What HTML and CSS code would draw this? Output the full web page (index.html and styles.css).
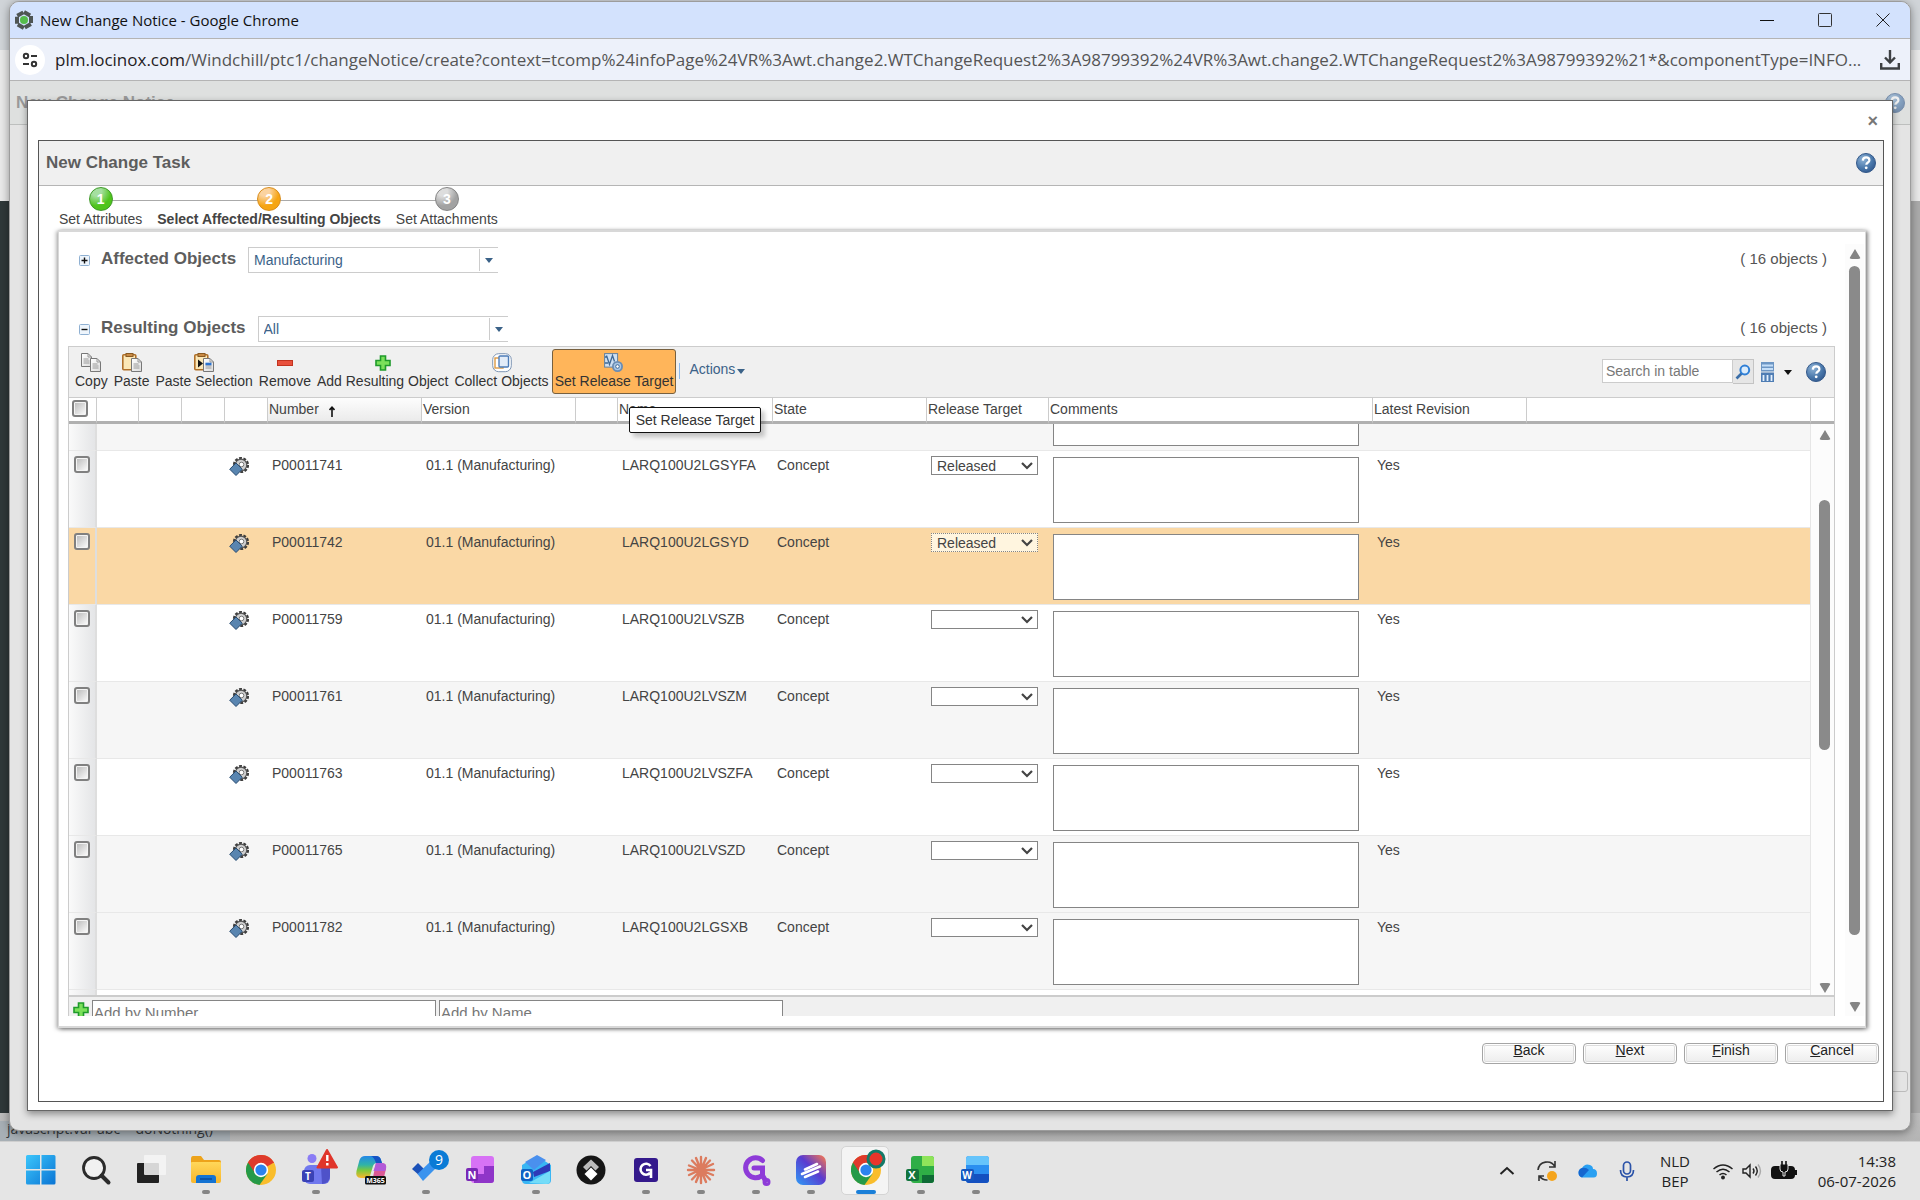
FILE: index.html
```html
<!DOCTYPE html>
<html lang="en">
<head>
<meta charset="utf-8">
<title>New Change Notice</title>
<link rel="stylesheet" href="styles.css">
</head>
<body>
<svg class="defs" aria-hidden="true">
  <defs>
    <radialGradient id="helpFill" cx="0.35" cy="0.3" r="0.8"><stop offset="0" stop-color="#8fb3d6"/><stop offset="0.6" stop-color="#4a78ab"/><stop offset="1" stop-color="#2f568c"/></radialGradient>
    <linearGradient id="pageFill" x2="1" y2="1"><stop offset="0" stop-color="#fff"/><stop offset="1" stop-color="#dcdcdc"/></linearGradient>
    <linearGradient id="winFill" x2="1" y2="1"><stop offset="0" stop-color="#3cc6fb"/><stop offset="1" stop-color="#0a74d4"/></linearGradient>
    <linearGradient id="folderFill" y2="1" x2="0"><stop offset="0" stop-color="#ffd75a"/><stop offset="1" stop-color="#f9b62a"/></linearGradient>
    <linearGradient id="appFill" x1="1" x2="0" y2="1"><stop offset="0" stop-color="#ff7a4a"/><stop offset="0.45" stop-color="#5a3bd0"/><stop offset="1" stop-color="#2f9bf5"/></linearGradient>
    <linearGradient id="copilotFill" x2="0" y2="1"><stop offset="0" stop-color="#2487e8"/><stop offset="0.4" stop-color="#2fb3a8"/><stop offset="0.65" stop-color="#7cc83c"/><stop offset="1" stop-color="#fbb52a"/></linearGradient>
  </defs>
  <symbol id="help" viewBox="0 0 20 20"><circle cx="10" cy="10" r="9.5" fill="url(#helpFill)" stroke="#34598a"/><path d="M6.8 7.6C6.9 5.4 8.3 4.4 10.2 4.4c2 0 3.2 1.200 3.200 2.800 0 2.300-3.100 2.300-3.100 4.600" fill="none" stroke="#fff" stroke-width="2.200"/><circle cx="10.200" cy="14.800" r="1.400" fill="#fff"/></symbol>
  <symbol id="gear" viewBox="0 0 20 20"><circle cx="12" cy="9" r="6.600" fill="none" stroke="#3c3c3c" stroke-width="3" stroke-dasharray="2.700 1.450"/><circle cx="12" cy="9" r="5.800" fill="#cfcfcf" stroke="#555" stroke-width="1.200"/><circle cx="12.500" cy="8.500" r="2.300" fill="#fff" stroke="#777"/><path d="M7 7 13.300 13.200 7 19.500.7 13.200z" fill="#5985b0" stroke="#274b70"/></symbol>
  <symbol id="plus" viewBox="0 0 16 16"><path d="M5.500 1h5v4.500H15v5h-4.500V15h-5v-4.500H1v-5h4.500z" fill="#7be05a" stroke="#1f9a2b" stroke-width="1.600"/></symbol>
  <symbol id="page" viewBox="0 0 11 14"><path d="M.5.5h6.500l3.500 3.500v9.500H.5z" fill="url(#pageFill)" stroke="#777"/><path d="M7 .5V4h3.500M2.500 6h5M2.500 8h6M2.500 10h6" fill="none" stroke="#999"/></symbol>
  <symbol id="chrome" viewBox="0 0 30 30"><circle cx="15" cy="15" r="15" fill="#f9bd2c"/><path d="M15 15 2 7.500A15 15 0 0 1 28 7.500z" fill="#de3a2c"/><path d="M15 15 2 7.500A15 15 0 0 0 13.500 30L21.500 18.800z" fill="#259a48"/><path d="M15 8h12.900A15 15 0 0 0 2 7.500L9 18z" fill="#de3a2c"/><circle cx="15" cy="15" r="7.200" fill="#fff"/><circle cx="15" cy="15" r="5.600" fill="#2b83ee"/></symbol>
</svg>

<div class="desktop">
  <div class="behind-status"><span>javascript:var abc = doNothing()</span></div>
  <main class="window">
    <header class="titlebar">
      <svg class="app-icon" viewBox="0 0 20 20"><path d="M10 2 17 6v8l-7 4-7-4V6z" fill="none" stroke="#4e5554" stroke-width="4" stroke-dasharray="7 1.100"/><circle cx="10" cy="10" r="4" fill="#55bb4b"/></svg>
      <span class="title">New Change Notice - Google Chrome</span>
      <div class="window-controls">
        <button aria-label="Minimize"><svg viewBox="0 0 14 14"><path d="M0 7.500h14" stroke="#111"/></svg></button>
        <button aria-label="Maximize"><svg viewBox="0 0 14 14"><rect x=".5" y=".5" width="13" height="13" rx="1" fill="none" stroke="#333"/></svg></button>
        <button aria-label="Close"><svg viewBox="0 0 14 14"><path d="M.5.5l13 13M13.500.5l-13 13" stroke="#222"/></svg></button>
      </div>
    </header>
    <div class="addressbar">
      <button class="site-info" aria-label="Site information"><svg viewBox="0 0 16 16" fill="none" stroke="#333" stroke-width="2"><circle cx="4" cy="4" r="2.200"/><path d="M9 4h6M1 12h6"/><circle cx="12" cy="12" r="2.200"/></svg></button>
      <span class="url"><b>plm.locinox.com</b>/Windchill/ptc1/changeNotice/create?context=tcomp%24infoPage%24VR%3Awt.change2.WTChangeRequest2%3A98799392%24VR%3Awt.change2.WTChangeRequest2%3A98799392%21*&amp;componentType=INFO...</span>
      <button class="download" aria-label="Downloads"><svg viewBox="0 0 20 20" fill="none" stroke="#3d4043" stroke-width="2.400"><path d="M10 0v12M5 7.500l5 5 5-5M1.200 13v5.500h17.600V13"/></svg></button>
    </div>
    <div class="page">
      <div class="page-header"><h1>New Change Notice</h1><svg class="help"><use href="#help"/></svg></div>
      <div class="page-button"></div>

      <section class="modal" role="dialog" aria-label="New Change Task">
        <div class="modal-bar"><button class="modal-close" aria-label="Close dialog">×</button></div>
        <div class="frame">
          <div class="frame-header"><h2>New Change Task</h2><svg class="help"><use href="#help"/></svg></div>
          <ol class="steps">
            <li><span class="dot done">1</span>Set Attributes</li>
            <li class="current"><span class="dot active">2</span>Select Affected/Resulting Objects</li>
            <li><span class="dot todo">3</span>Set Attachments</li>
          </ol>

          <div class="panel">
            <div class="content">
              <div class="section-row">
                <button class="toggle" aria-label="Expand"><svg viewBox="0 0 11 11"><rect x=".5" y=".5" width="10" height="10" rx="1" fill="#eef5fc" stroke="#8fb0d2"/><path d="M2.500 5.500h6M5.500 2.500v6" stroke="#111" stroke-width="1.400"/></svg></button>
                <label class="heading" for="affected">Affected Objects</label>
                <select class="combo" id="affected"><option>Manufacturing</option></select>
                <span class="count">( 16 objects )</span>
              </div>
              <div class="section-row second">
                <button class="toggle" aria-label="Collapse"><svg viewBox="0 0 11 11"><rect x=".5" y=".5" width="10" height="10" rx="1" fill="#eef5fc" stroke="#8fb0d2"/><path d="M2.500 5.500h6" stroke="#111" stroke-width="1.400"/></svg></button>
                <label class="heading" for="resulting">Resulting Objects</label>
                <select class="combo" id="resulting"><option>All</option></select>
                <span class="count">( 16 objects )</span>
              </div>

              <div class="grid">
                <div class="toolbar">
                  <button class="tool"><svg viewBox="0 0 20 20"><use href="#page" width="11" height="14"/><use href="#page" x="9" y="5" width="11" height="14"/></svg>Copy</button>
                  <button class="tool"><svg viewBox="0 0 20 20"><rect x=".8" y="1.800" width="13" height="15" rx="1" fill="#fbe7b6" stroke="#b0702a" stroke-width="1.600"/><rect x="4" y=".5" width="7" height="3" fill="#c98a45" stroke="#8a5a22"/><use href="#page" x="9" y="5" width="11" height="14"/></svg>Paste</button>
                  <button class="tool"><svg viewBox="0 0 20 20"><rect x=".8" y="1.800" width="13" height="15" rx="1" fill="#fbe7b6" stroke="#b0702a" stroke-width="1.600"/><rect x="4" y=".5" width="7" height="3" fill="#c98a45" stroke="#8a5a22"/><use href="#page" x="9" y="5" width="11" height="14"/><path d="M4 6.500l5 4-5 4z" fill="#111"/><path d="M11.500 11h6" stroke="#2c74d0" stroke-width="2.600"/></svg>Paste Selection</button>
                  <button class="tool"><svg viewBox="0 0 20 20"><rect x="2.500" y="7.500" width="15" height="5" fill="#e8503c" stroke="#c2331f"/></svg>Remove</button>
                  <button class="tool"><svg viewBox="0 0 20 20"><use href="#plus" x="2" y="2" width="16" height="16"/></svg>Add Resulting Object</button>
                  <button class="tool"><svg viewBox="0 0 20 20"><rect x=".7" y=".7" width="18.600" height="18" rx="6" fill="#fff" stroke="#7e95b4"/><rect x="3" y="5" width="8" height="10" fill="#fff" stroke="#dc9a45" stroke-width="1.400"/><rect x="7" y="3" width="9.500" height="11" rx="1" fill="#e3ecf8" stroke="#4d7cb8" stroke-width="1.400"/></svg>Collect Objects</button>
                  <button class="tool hover"><svg viewBox="0 0 20 20"><rect x=".6" y=".6" width="13" height="13.500" fill="#cfe0f2" stroke="#62809f"/><path d="M2.500 2.500l3 9 3-9 2 6M1 4h2M1 10h3" fill="none" stroke="#3d6896" stroke-width="1.300"/><circle cx="13.500" cy="13.500" r="4.600" fill="#a9c6e4" stroke="#6b8db4" stroke-width="1.800"/><circle cx="13.500" cy="13.500" r="1.800" fill="#fff" stroke="#3d6896"/></svg>Set Release Target<span class="tooltip" role="tooltip">Set Release Target</span></button>
                  <span class="divider"></span>
                  <button class="actions">Actions<i class="caret"></i></button>
                  <div class="tools-right">
                    <input class="search" type="text" placeholder="Search in table" aria-label="Search in table">
                    <button class="search-btn" aria-label="Search"><svg viewBox="0 0 16 16"><path d="M1.500 14.500 7 9" stroke="#3a6ea8" stroke-width="2.600"/><circle cx="9.800" cy="6" r="4.400" fill="#dcecfb" stroke="#2f7fd6" stroke-width="2"/></svg></button>
                    <button class="view-btn" aria-label="Table view"><svg viewBox="0 0 13 20"><rect width="13" height="9.500" fill="#6d96c4"/><path d="M1 3.500h11M1 7h11" stroke="#c4def8" stroke-width="1.800"/><rect y="10.500" width="13" height="9.500" fill="#4f7db4"/><path d="M2.500 13v6M6.500 13v6M10.500 13v6" stroke="#e4f0fd" stroke-width="1.800"/></svg><i class="caret dark"></i></button>
                    <svg class="help"><use href="#help"/></svg>
                  </div>
                </div>

                <table class="head">
                  <colgroup><col class="c-check"><col class="c-a"><col class="c-b"><col class="c-b"><col class="c-b"><col class="c-text"><col class="c-text"><col class="c-a"><col class="c-name"><col class="c-text"><col class="c-target"><col class="c-comment"><col class="c-text"><col><col class="c-scroll"></colgroup>
                  <thead><tr><th><input type="checkbox" class="check" aria-label="Select all"></th><th></th><th></th><th></th><th></th><th class="sorted">Number<svg class="sort" viewBox="0 0 6 11"><path d="M3 11V1M.5 4 3 1.200 5.500 4" fill="none" stroke="#111" stroke-width="1.600"/></svg></th><th>Version</th><th></th><th>Name</th><th>State</th><th>Release Target</th><th>Comments</th><th>Latest Revision</th><th></th><th></th></tr></thead>
                </table>

                <div class="body">
                  <div class="viewport">
                  <table class="rows">
                    <colgroup><col class="c-check"><col class="c-a"><col class="c-b"><col class="c-b"><col class="c-b"><col class="c-text"><col class="c-text"><col class="c-a"><col class="c-name"><col class="c-text"><col class="c-target"><col class="c-comment"><col class="c-text"><col></colgroup>
                    <tbody>
                    <tr class="alt"><td></td><td></td><td></td><td></td><td></td><td></td><td></td><td></td><td></td><td></td><td></td><td><textarea aria-label="Comments"></textarea></td><td></td><td></td></tr>
                    <tr><td><input type="checkbox" class="check" aria-label="Select P00011741"></td><td></td><td></td><td></td><td><svg class="part"><use href="#gear"/></svg></td><td>P00011741</td><td>01.1 (Manufacturing)</td><td></td><td>LARQ100U2LGSYFA</td><td>Concept</td><td><select class="target" aria-label="Release target"><option>Released</option></select></td><td><textarea aria-label="Comments"></textarea></td><td>Yes</td><td></td></tr>
                    <tr class="selected"><td><input type="checkbox" class="check" aria-label="Select P00011742"></td><td></td><td></td><td></td><td><svg class="part"><use href="#gear"/></svg></td><td>P00011742</td><td>01.1 (Manufacturing)</td><td></td><td>LARQ100U2LGSYD</td><td>Concept</td><td><select class="target" aria-label="Release target"><option>Released</option></select></td><td><textarea aria-label="Comments"></textarea></td><td>Yes</td><td></td></tr>
                    <tr><td><input type="checkbox" class="check" aria-label="Select P00011759"></td><td></td><td></td><td></td><td><svg class="part"><use href="#gear"/></svg></td><td>P00011759</td><td>01.1 (Manufacturing)</td><td></td><td>LARQ100U2LVSZB</td><td>Concept</td><td><select class="target" aria-label="Release target"><option></option></select></td><td><textarea aria-label="Comments"></textarea></td><td>Yes</td><td></td></tr>
                    <tr class="alt"><td><input type="checkbox" class="check" aria-label="Select P00011761"></td><td></td><td></td><td></td><td><svg class="part"><use href="#gear"/></svg></td><td>P00011761</td><td>01.1 (Manufacturing)</td><td></td><td>LARQ100U2LVSZM</td><td>Concept</td><td><select class="target" aria-label="Release target"><option></option></select></td><td><textarea aria-label="Comments"></textarea></td><td>Yes</td><td></td></tr>
                    <tr><td><input type="checkbox" class="check" aria-label="Select P00011763"></td><td></td><td></td><td></td><td><svg class="part"><use href="#gear"/></svg></td><td>P00011763</td><td>01.1 (Manufacturing)</td><td></td><td>LARQ100U2LVSZFA</td><td>Concept</td><td><select class="target" aria-label="Release target"><option></option></select></td><td><textarea aria-label="Comments"></textarea></td><td>Yes</td><td></td></tr>
                    <tr class="alt"><td><input type="checkbox" class="check" aria-label="Select P00011765"></td><td></td><td></td><td></td><td><svg class="part"><use href="#gear"/></svg></td><td>P00011765</td><td>01.1 (Manufacturing)</td><td></td><td>LARQ100U2LVSZD</td><td>Concept</td><td><select class="target" aria-label="Release target"><option></option></select></td><td><textarea aria-label="Comments"></textarea></td><td>Yes</td><td></td></tr>
                    <tr class="alt"><td><input type="checkbox" class="check" aria-label="Select P00011782"></td><td></td><td></td><td></td><td><svg class="part"><use href="#gear"/></svg></td><td>P00011782</td><td>01.1 (Manufacturing)</td><td></td><td>LARQ100U2LGSXB</td><td>Concept</td><td><select class="target" aria-label="Release target"><option></option></select></td><td><textarea aria-label="Comments"></textarea></td><td>Yes</td><td></td></tr>
                    <tr><td><input type="checkbox" class="check" aria-label="Select row"></td><td></td><td></td><td></td><td></td><td></td><td></td><td></td><td></td><td></td><td><select class="target" aria-label="Release target"><option></option></select></td><td></td><td></td><td></td></tr>
                    </tbody>
                  </table>
                  </div>
                  <div class="scrollbar inner"><i class="up"></i><div class="track"><i class="thumb"></i></div><i class="down"></i></div>
                </div>
                <div class="adder">
                  <svg class="add-icon"><use href="#plus"/></svg>
                  <input type="text" placeholder="Add by Number" aria-label="Add by Number">
                  <input type="text" placeholder="Add by Name" aria-label="Add by Name">
                </div>
              </div>
            </div>
            <div class="scrollbar outer"><i class="up"></i><div class="track"><i class="thumb"></i></div><i class="down"></i></div>
          </div>

          <footer class="wizard-buttons">
            <button><u>B</u>ack</button><button><u>N</u>ext</button><button><u>F</u>inish</button><button><u>C</u>ancel</button>
          </footer>
        </div>
      </section>
    </div>
  </main>
</div>

<nav class="taskbar" aria-label="Taskbar">
  <div class="apps">
    <button aria-label="Start"><svg viewBox="0 0 30 30" fill="url(#winFill)"><path d="M0 1.500Q0 0 1.500 0H14v14H0zM15.500 0H28q1.500 0 1.500 1.500V14h-14zM0 15.500h14v14H1.500Q0 29.500 0 28zM15.500 15.500h14V28q0 1.500-1.500 1.500H15.500z"/></svg></button>
    <button aria-label="Search"><svg viewBox="0 0 30 30" fill="none" stroke="#2b2b2b"><circle cx="13" cy="13" r="10.500" fill="#f1f1f1" stroke-width="2.800"/><path d="M20.500 20.500l7 7" stroke-width="4" stroke-linecap="round"/></svg></button>
    <button aria-label="Task view"><svg viewBox="0 0 30 30"><rect x="1" y="8" width="22" height="20" rx="1" fill="#222"/><rect x="8" y="0" width="22" height="20" rx="1" fill="#f6f6f6" fill-opacity=".85"/></svg></button>
    <button class="running" aria-label="File Explorer"><svg viewBox="0 0 30 30"><path d="M0 4q0-3 2-3h8l3 4h15q2 0 2 2v8H0z" fill="#eda31b"/><path d="M0 8q0-1 1-1h28q1 0 1 1v18q0 2-2 2H2q-2 0-2-2z" fill="url(#folderFill)"/><path d="M5 28v-5q0-3 3-3h14q3 0 3 3v5z" fill="#1473d2"/><path d="M9 24h12" stroke="#0a4a9a" stroke-width="1.500"/></svg></button>
    <button aria-label="Chrome"><svg><use href="#chrome"/></svg></button>
    <button class="running" aria-label="Teams"><svg viewBox="0 0 30 30"><circle cx="11" cy="3.500" r="4.500" fill="#8a7cf5"/><rect x="3" y="10" width="26" height="19" rx="6" fill="#7078ee"/><path d="M20 11h9v10q0 7-8 8z" fill="#4f52c9"/><rect x="1" y="15" width="12" height="12" rx="2" fill="#3a42b5"/><text x="7" y="25" class="glyph g10">T</text><path d="M26-5 36 12.500H16.500z" fill="#e0352b" stroke="#e0352b" stroke-width="2" stroke-linejoin="round"/><path d="M26.300 0v6M26.300 8v2.500" stroke="#fff" stroke-width="2.400"/></svg></button>
    <button aria-label="Microsoft 365 Copilot"><svg viewBox="0 0 30 30"><path d="M9 1h11q4 0 5 4l1 3h-5q-3 0-4 3l-3 10q-1 2-4 2H5q-6 0-4.500-7l3-11Q5 1 9 1z" fill="url(#copilotFill)"/><path d="M15 1h5q4 0 5 4l1 3h-6q-2-6-5-7z" fill="#1553c4"/><path d="M20 8h6q5 0 4 6l-2 8q-1 5-6 5h-9q3-1 4-5z" fill="#dc5a96"/><path d="M20 8h6q5 0 4 6l-1 2H17.500z" fill="#b25ad8"/><rect x="9" y="21" width="21" height="8.500" rx="1.500" fill="#111"/><text x="19.500" y="28" class="glyph g7">M365</text></svg></button>
    <button class="running" aria-label="To Do"><svg viewBox="0 0 30 30"><path d="M1 14l6-6 7 7-5 6z" fill="#1b51b8"/><path d="M6.500 19 22 4l7 5-17 17z" fill="#3a93ee"/></svg><span class="badge">9</span></button>
    <button aria-label="OneNote"><svg viewBox="0 0 30 30"><rect x="5" y="1" width="23" height="27" rx="3" fill="#d772f5"/><path d="M18 11h10v14q0 3-3 3H8v-9h10z" fill="#8f35c8"/><rect y="13" width="12" height="13" rx="2" fill="#7a28b5"/><text x="6" y="24" class="glyph g11">N</text></svg></button>
    <button class="running" aria-label="Outlook"><svg viewBox="0 0 30 30"><path d="M1 10 16 1l14 9v15q0 4-4 4H5q-4 0-4-4z" fill="#39b6f4"/><path d="M4 7 16 0l9 5-12 10z" fill="#4a90ee"/><path d="M12 17 29 8v8l-16 6z" fill="#2e39b8"/><path d="M8 28 29 16v10q0 3-4 3z" fill="#74dcf8"/><rect y="14" width="12" height="12" rx="2" fill="#0f62c4"/><text x="6" y="24" class="glyph g11">O</text></svg></button>
    <button aria-label="Diamond"><svg viewBox="0 0 30 30"><circle cx="15" cy="15" r="14.500" fill="#161616"/><path d="M15 4.500 23 12l-3.500 3.500L15 11l-4.500 4.500L7 12z" fill="#bbb"/><path d="M15 12.500l6.500 6.500L15 25.500 8.500 19z" fill="#fff"/></svg></button>
    <button class="running" aria-label="G app"><svg viewBox="0 0 30 30"><rect x="3" y="3" width="24" height="24" rx="3" fill="#34198c"/><path d="M19.500 11A5.500 5.500 0 1 0 19 18M15 15h5v8" fill="none" stroke="#fff" stroke-width="2.600"/></svg></button>
    <button class="running" aria-label="Claude"><svg viewBox="0 0 30 30" stroke="#dc7b5e" stroke-width="2.400" stroke-linecap="round"><path d="M15 2v26M2 15h26M6 5.500l18 19M24 5.500l-18 19M10 3l10 24M3 10.500l24 9.500M20 3 10 27M27 9 3 20"/></svg></button>
    <button class="running" aria-label="Gong"><svg viewBox="0 0 30 30" fill="none" stroke="#8e3bd8" stroke-width="5"><path d="M21.500 5.500A10 10 0 1 0 21 20.500M13 13h8.500v7.500l3 5" stroke-linecap="round"/><circle cx="25.500" cy="27" r="1.500"/></svg></button>
    <button class="running" aria-label="Workspace"><svg viewBox="0 0 30 30"><rect width="30" height="30" rx="7" fill="url(#appFill)"/><path d="M9 14.500 21 9M6 19l18-7.500M9 22l13-5.500" stroke="#fff" stroke-width="2.600" stroke-linecap="round"/></svg></button>
    <button class="focused" aria-label="Chrome, active"><svg viewBox="0 0 30 30"><use href="#chrome" width="30" height="30"/><circle cx="25" cy="4" r="8" fill="#e8352b" stroke="#157a68" stroke-width="3"/></svg></button>
    <button class="running" aria-label="Excel"><svg viewBox="0 0 30 30"><rect x="5" y="1" width="23" height="27" rx="3" fill="#2fae46"/><path d="M16 1h9q3 0 3 3v7H16z" fill="#8fe45a"/><path d="M16 20h12v5q0 3-3 3h-9z" fill="#0f6b35"/><rect y="14" width="13" height="12" rx="2" fill="#12743c"/><text x="6" y="24" class="glyph g11">X</text></svg></button>
    <button class="running" aria-label="Word"><svg viewBox="0 0 30 30"><rect x="5" y="1" width="23" height="27" rx="3" fill="#2b8ff0"/><path d="M8 1h17q3 0 3 3v6H5V4q0-3 3-3z" fill="#66c4fb"/><path d="M5 19h23v6q0 3-3 3H8q-3 0-3-3z" fill="#1450c0"/><rect y="14" width="13" height="12" rx="2" fill="#1558c0"/><text x="6" y="24" class="glyph g10">W</text></svg></button>
  </div>
  <div class="tray">
    <svg viewBox="0 0 20 20" fill="none" stroke="#222" stroke-width="2"><path d="M3.500 13 10 7l6.500 6"/></svg>
    <svg viewBox="0 0 20 20" fill="none" stroke="#333" stroke-width="1.600"><path d="M1 9a9 9 0 0 1 17-3M18 0v6h-6M2 20v-5h5M2.500 15a9 9 0 0 0 8 4"/><circle cx="15" cy="15" r="5" fill="#f4a41c" stroke="none"/></svg>
    <svg viewBox="0 0 20 20"><path d="M5 16.500a5 5 0 0 1 0-9.500q3-5 8-3 3 1 3 4 4 0 4 4.500t-4 4z" fill="#2aa0f2"/><path d="M5 16.500a5 5 0 0 1 0-9.500q4-1 7 2z" fill="#1566cf"/></svg>
    <svg viewBox="0 0 20 20" fill="none" stroke="#2a52a8" stroke-width="1.700"><rect x="6.500" y="1" width="7" height="12" rx="3.500"/><path d="M3.500 9q0 7 6.500 7t6.500-7M10 16v4"/></svg>
    <div class="lang">NLD<br>BEP</div>
    <svg viewBox="0 0 20 20" fill="none" stroke="#222" stroke-width="1.500"><path d="M.5 8q9.500-8 19 0M3.500 11q6.500-5.500 13 0M6.500 14q3.500-3 7 0"/><circle cx="10" cy="16.500" r="1.200" fill="#222"/></svg>
    <svg viewBox="0 0 20 20" fill="none" stroke="#222" stroke-width="1.400"><path d="M1 8h3l4-4v12l-4-4H1zM11 7.500q2 2.500 0 5M13.500 5.500q3.500 4.500 0 9"/><path d="M16 3.500q5 6.500 0 13" stroke="#aaa"/></svg>
    <svg class="battery" viewBox="0 0 26 20"><rect x="1" y="6" width="22" height="11" rx="3" fill="#111" stroke="#111" stroke-width="2"/><rect x="24" y="9" width="2" height="5" fill="#111"/><path d="M9 3h8v5q0 3-3 3v4h-2v-4q-3 0-3-3z" fill="#111" stroke="#e5e5e5"/><path d="M11 0v4M15 0v4" stroke="#111" stroke-width="1.600"/></svg>
    <div class="clock">14:38<br>06-07-2026</div>
  </div>
</nav>
</body>
</html>
```
FILE: styles.css
```css
* { box-sizing: border-box; }
body {
  margin: 0;
  height: 100vh;
  overflow: hidden;
  display: flex;
  flex-direction: column;
  font-family: "Liberation Sans", Arial, sans-serif;
  font-size: 14px;
  line-height: 16px;
  color: #444;
}
button, input, select, textarea { font: inherit; color: inherit; }
button { padding: 0; border: 0; background: none; }
h1, h2 { margin: 0; font-size: 17px; line-height: 20px; }
.defs { position: absolute; width: 0; height: 0; }
.help { width: 20px; height: 20px; flex: none; }

/* desktop and the window behind */
.desktop {
  flex: 1;
  min-height: 0;
  position: relative;
  padding: 1px 9px 10px;
  background:
    linear-gradient(#bdbdbd, #b4b4b4) bottom / 100% 28px no-repeat,
    linear-gradient(#d0d4d8 50px, #e8e8e8 50px 201px, #aaa 201px) right / 50% 100% no-repeat,
    linear-gradient(#d0d4d8 50px, #e8e8e8 50px 201px, #2f3839 201px);
}
.behind-status {
  position: absolute;
  left: 0;
  bottom: 0;
  width: 230px;
  padding: 0 7px 4px;
  background: #a7afb5;
  color: #34383c;
  font-family: "Open Sans", sans-serif;
}
.window {
  position: relative;
  height: 100%;
  display: flex;
  flex-direction: column;
  border: 1px solid #9c9c9c;
  border-radius: 10px;
  overflow: hidden;
  background: #e4e4e4;
  box-shadow: 0 2px 8px #0006;
}
.titlebar, .addressbar {
  display: flex;
  align-items: center;
  font-family: "Open Sans", sans-serif;
  flex: none;
}
.titlebar { height: 37px; padding: 0 20px 0 4px; background: #d3e2fd; border-bottom: 1px solid #b4b4b4; }
.app-icon { width: 20px; height: 20px; margin-right: 6px; }
.title { flex: 1; color: #111; font-size: 15px; }
.window-controls { display: flex; gap: 44px; }
.window-controls svg { width: 14px; height: 14px; display: block; }
.addressbar { height: 42px; padding: 0 10px 0 5px; background: #edf1fa; border-bottom: 1px solid #b4b4b4; font-size: 17px; color: #555; gap: 10px; }
.site-info { width: 30px; height: 30px; flex: none; border-radius: 50%; background: #fff; }
.site-info svg { width: 16px; height: 16px; display: block; margin: auto; }
.url { flex: 1; min-width: 0; white-space: nowrap; line-height: 24px; }
.url b { font-weight: 400; color: #1f2023; }
.download svg { width: 20px; height: 20px; display: block; }

.page { flex: 1; position: relative; }
.page-header { height: 44px; padding: 0 5px 0 6px; display: flex; align-items: center; justify-content: space-between; background: #dee0df; border-bottom: 1px solid #bdbfbe; color: #999; }
.page-header .help { opacity: .6; }
.page-button { position: absolute; right: 2px; bottom: 38px; width: 30px; height: 21px; border: 1px solid #bbb; border-radius: 3px; }

/* dialog */
.modal {
  position: absolute;
  inset: 19px 17px 19px;
  display: flex;
  flex-direction: column;
  padding: 0 8px 8px 10px;
  background: #fff;
  border: 1px solid #666;
  box-shadow: 0 3px 7px #0006;
}
.modal-bar { height: 39px; padding-right: 6px; display: flex; justify-content: flex-end; align-items: center; flex: none; }
.modal-close { font-size: 18px; font-weight: 700; color: #777; line-height: 16px; }
.frame { flex: 1; min-height: 0; display: flex; flex-direction: column; border: 1px solid #555; }
.frame-header { height: 45px; flex: none; padding: 0 7px; display: flex; align-items: center; justify-content: space-between; background: #f0f0f0; border-bottom: 1px solid #b5b5b5; color: #5d5d5d; }
.steps { position: relative; align-self: flex-start; display: flex; gap: 15px; flex: none; height: 44px; margin: 0; padding: 1px 20px 0; list-style: none; }
.steps::before { content: ""; position: absolute; top: 14px; left: 60px; right: 70px; border-top: 1px solid #aaa; }
.steps li { position: relative; display: flex; flex-direction: column; align-items: center; }
.steps .current { font-weight: 700; }
.dot { width: 24px; height: 24px; border-radius: 50%; font: 700 14px/22px "Liberation Sans", sans-serif; color: #fff; text-align: center; border: 1px solid; }
.done { background: radial-gradient(circle at 30% 15%, #a5dfa0 20%, #4fc41c 60%); border-color: #3f9a2a; }
.active { background: radial-gradient(circle at 30% 15%, #fbd3a0 20%, #f6a513 60%); border-color: #d98d1c; }
.todo { background: radial-gradient(circle at 30% 15%, #ddd 20%, #a2a2a2 60%); border-color: #858585; }

.panel {
  flex: 1;
  min-height: 0;
  display: flex;
  margin: 0 17px 0 19px;
  padding: 0 1px 10px 9px;
  border: 1px solid #d8d8d8;
  border-top-width: 2px;
  border-bottom-width: 2px;
  box-shadow: 2px 1px 4px #0007, -2px 1px 4px #0004;
}
.content { flex: 1; min-width: 0; display: flex; flex-direction: column; padding: 15px 10px 0 0; }
.section-row { display: flex; align-items: center; height: 26px; flex: none; padding: 0 8px 0 11px; }
.second { margin: 43px 0 4px; }
.toggle svg { width: 11px; height: 11px; display: block; }
.heading { margin: 0 12px 2px 11px; font-size: 17px; line-height: 20px; font-weight: 700; color: #5d5d5d; }
.combo {
  appearance: none;
  width: 250px;
  height: 26px;
  padding: 0 5px;
  border: 1px solid #ccc;
  border-right: 0;
  border-radius: 0;
  color: #3b6288;
  background:
    url("data:image/svg+xml,%3Csvg xmlns='http://www.w3.org/2000/svg' width='8' height='5'%3E%3Cpath d='M0 0h8L4 5z' fill='%233b6288'/%3E%3C/svg%3E") right 5px center no-repeat,
    linear-gradient(#ccc, #ccc) right 18px center / 1px 22px no-repeat #fff;
}
.count { margin: 0 0 2px auto; font-size: 15px; color: #555; }

/* object table */
.grid { flex: 1; min-height: 0; display: flex; flex-direction: column; border: 1px solid #ccc; border-bottom: 0; }
.toolbar { display: flex; flex: none; height: 51px; padding: 2px 8px 0 3px; background: #f0f0f0; border-bottom: 1px solid #ccc; color: #333; }
.tool { position: relative; height: 45px; padding: 3px 2px 0; border: 1px solid transparent; display: flex; flex-direction: column; align-items: center; white-space: nowrap; }
.tool svg { width: 20px; height: 20px; flex: none; }
.hover { background: #ffb55a; border-color: #77603f; border-radius: 3px; }
.tooltip { position: absolute; z-index: 2; left: 76px; top: 57px; padding: 3px 6px; border: 1px solid #111; border-radius: 2px; background: #fff; box-shadow: 4px 4px 4px #0003; line-height: 18px; }
.divider { width: 1px; height: 16px; margin: 14px 9px 0 3px; background: #8db9ea; }
.actions { align-self: flex-start; margin-top: 11px; color: #3b6288; display: flex; align-items: center; gap: 2px; line-height: 18px; }
.caret { border: 4px solid transparent; border-top: 5px solid #3b6288; border-bottom: 0; margin-top: 4px; }
.caret.dark { border-top-color: #111; margin: 0; }
.tools-right { margin-left: auto; display: flex; align-items: flex-start; padding-top: 10px; }
.search { width: 131px; height: 24px; padding: 0 3px; border: 1px solid #ccc; background: #fff; }
.search::placeholder, .adder input::placeholder { color: #777; opacity: 1; }
.search-btn { width: 21px; height: 25px; border: 1px solid #c4c4c4; border-left: 0; background: #e6e6e6; }
.search-btn svg { width: 16px; height: 16px; display: block; margin: auto; }
.view-btn { display: flex; align-items: center; gap: 10px; margin: 3px 14px 0 7px; }
.view-btn svg { width: 13px; height: 20px; }
.tools-right .help { margin-top: 3px; }

table { width: 100%; table-layout: fixed; border-collapse: separate; border-spacing: 0; }
.c-check { width: 28px; }
.c-a { width: 42px; }
.c-b { width: 43px; }
.c-text { width: 154px; }
.c-name { width: 155px; }
.c-target { width: 122px; }
.c-comment { width: 324px; }
.c-scroll { width: 23px; }
.head { flex: none; }
th { height: 26px; padding: 0 0 2px 1px; border-right: 1px solid #ccc; border-bottom: 3px solid #b0b0b0; text-align: left; font-weight: 400; white-space: nowrap; overflow: hidden; background: #fff; }
th:last-child { border-right: 0; }
.sorted { background: linear-gradient(#fdfdfd, #ebebeb); }
.sort { width: 6px; height: 11px; margin-left: 10px; vertical-align: -3px; }
.check {
  appearance: none;
  display: block;
  width: 16px;
  height: 17px;
  margin: 0 0 0 5px;
  border: 2px solid #808080;
  border-radius: 3px;
  background: linear-gradient(135deg, #b8b8b8, #fff);
  box-shadow: inset 0 0 0 1px #f4f4f4;
}
th .check { margin: 0 0 0 2px; }
.body { flex: 1; min-height: 0; display: flex; border-bottom: 2px solid #ccc; }
.viewport { flex: 1; min-width: 0; overflow: hidden; border-right: 1px solid #e6e6e6; }
.rows { margin-top: -50px; }
td { height: 77px; padding: 5px 0 0 4px; border-bottom: 1px solid #e8e8e8; vertical-align: top; line-height: 18px; white-space: nowrap; }
td:first-child { padding-left: 0; border-right: 2px solid #dedede; background: linear-gradient(90deg, #fafafa, #e4e5e7); }
.alt td:not(:first-child) { background: #f6f6f6; }
.selected td, .selected td:first-child { background: #fad8a5; }
.part { display: block; width: 20px; height: 20px; }
.target {
  appearance: none;
  display: block;
  width: 107px;
  height: 19px;
  padding: 0 5px;
  border: 1px solid #858585;
  border-radius: 0;
  background: url("data:image/svg+xml,%3Csvg xmlns='http://www.w3.org/2000/svg' width='12' height='8'%3E%3Cpath d='M1 1l5 5 5-5' fill='none' stroke='%23444' stroke-width='2.200'/%3E%3C/svg%3E") right 4px center no-repeat #fff;
}
.selected .target { background-color: #fff5df; border-style: dotted; }
textarea { display: block; width: 306px; height: 66px; margin: 1px 0 0; border: 1px solid #858585; border-radius: 0; background: #fff; resize: none; }

.scrollbar { display: flex; flex-direction: column; align-items: center; flex: none; background: #fcfcfc; }
.scrollbar .up { border: 6px solid transparent; border-top: 0; border-bottom: 10px solid #858585; border-radius: 3px; }
.scrollbar .down { border: 6px solid transparent; border-bottom: 0; border-top: 10px solid #858585; border-radius: 3px; }
.track { flex: 1; display: flex; flex-direction: column; align-items: center; }
.thumb { width: 11px; border-radius: 6px; background: #8a8a8a; }
.inner { width: 23px; padding: 6px 0 2px 4px; }
.inner .thumb { height: 46%; margin-top: 60px; }
.outer { width: 19px; margin-top: 12px; padding: 5px 0 4px; }
.outer .thumb { height: 90%; margin-top: 7px; }

.adder { display: flex; flex: none; height: 19px; overflow: hidden; gap: 3px; padding: 3px 0 0 4px; background: #f0f0f0; align-items: flex-start; }
.adder input { width: 344px; height: 24px; padding: 0 1px; border: 1px solid #858585; background: #fff; font-size: 15px; flex: none; }
.add-icon { width: 16px; height: 16px; margin-top: 2px; }

.wizard-buttons { display: flex; flex: none; justify-content: flex-end; gap: 7px; padding: 15px 4px 37px; }
.wizard-buttons button { width: 94px; height: 21px; padding-bottom: 6px; border: 1px solid #a5a5a5; border-radius: 4px; background: linear-gradient(#fff, #ececec); box-shadow: inset 0 0 0 1px #fff, inset 0 0 0 2px #ddd; color: #222; line-height: 13px; }

/* taskbar */
.taskbar { flex: none; height: 59px; display: flex; justify-content: space-between; padding: 0 24px 0 13px; background: #e5e5e5; border-top: 1px solid #cfcfcf; }
.apps { display: flex; }
.apps button { position: relative; width: 55px; height: 58px; padding: 0 0 2px; display: flex; align-items: center; justify-content: center; }
.apps svg { width: 30px; height: 30px; overflow: visible; }
.running::after, .focused::after { content: ""; position: absolute; bottom: 6px; left: 24px; width: 8px; height: 4px; border-radius: 2px; background: #858585; }
.focused::before { content: ""; position: absolute; z-index: -1; inset: 4px 4px 5px 3px; border-radius: 5px; background: #f4f4f4; border: 1px solid #d4d4d4; }
.focused { isolation: isolate; }
.focused::after { left: 18px; width: 20px; background: #1a7fd8; }
.glyph { fill: #fff; font-family: "Open Sans", sans-serif; font-weight: 700; text-anchor: middle; }
.g7 { font-size: 7px; }
.g10 { font-size: 10px; }
.g11 { font-size: 11px; }
.badge { position: absolute; top: 8px; right: 4px; width: 20px; height: 20px; border-radius: 50%; background: #0a7bd6; color: #fff; font: 14px/20px "Open Sans", sans-serif; text-align: center; }
.tray { display: flex; align-items: center; gap: 20px; font: 15px/20px "Open Sans", sans-serif; color: #222; }
.tray svg { width: 20px; height: 20px; }
.tray .lang { width: 36px; text-align: center; }
.tray .lang ~ svg { margin-right: -11px; }
.tray .battery { width: 26px; }
.clock { width: 80px; margin-left: 10px; text-align: right; white-space: nowrap; }
```
